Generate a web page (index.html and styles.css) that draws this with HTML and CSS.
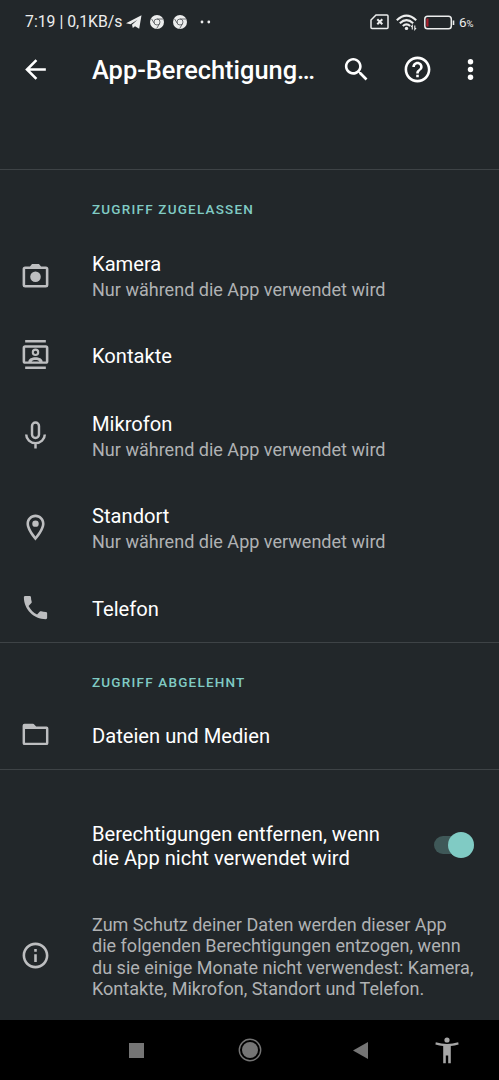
FILE: index.html
```html
<!DOCTYPE html>
<html lang="de">
<head>
<meta charset="utf-8">
<title>App-Berechtigungen</title>
<link rel="stylesheet" href="styles.css">
</head>
<body>
<div class="screen">
  <header class="status">
    <span class="clock">7:19 | 0,1KB/s</span>
    <svg class="plane" width="16" height="14" viewBox="0 0 16 14"><path fill="currentColor" d="M0 8.300 15.500 0.300 13.200 13.700 9 11.300 6.800 13 6 9.800 11.500 4.800 4.500 9.300z"/></svg>
    <svg class="chrome" width="14" height="14" viewBox="0 0 14 14"><circle cx="7" cy="7" r="7" fill="currentColor"/><g fill="none" stroke="#5b5f62" stroke-width=".9"><circle cx="7" cy="7" r="3"/><path d="M7 4h6M4.400 8.500 1.500 3.800M9.600 8.500 6.700 13.500"/></g></svg>
    <svg class="chrome" width="14" height="14" viewBox="0 0 14 14"><circle cx="7" cy="7" r="7" fill="currentColor"/><g fill="none" stroke="#5b5f62" stroke-width=".9"><circle cx="7" cy="7" r="3"/><path d="M7 4h6M4.400 8.500 1.500 3.800M9.600 8.500 6.700 13.500"/></g></svg>
    <svg class="more" width="11" height="4" viewBox="0 0 11 4" fill="currentColor"><circle cx="2" cy="2" r="1.400"/><circle cx="8.800" cy="2" r="1.400"/></svg>
    <svg class="sim" width="19" height="16" viewBox="0 0 19 16" fill="none" stroke="currentColor"><path stroke-width="1.500" d="M6 1h11q1 0 1 1v11.500q0 1-1 1H2q-1 0-1-1V6z"/><path stroke-width="2" d="m7.300 5.300 5 5m0-5-5 5"/></svg>
    <svg class="wifi" width="22" height="17" viewBox="0 0 22 17" fill="none" stroke="currentColor" stroke-width="2.100"><path d="M.8 6.200Q10.500-3 20.200 6.200M3.800 9.200q6.700-6 13.400 0M6.800 12q3.700-3.200 7.400 0"/><circle cx="10.500" cy="14.400" r="1.700" fill="currentColor" stroke="none"/><path stroke-width="1.100" d="M16.300 15.500v-4l-1.300 1.500M18.800 11.500v4l1.300-1.500"/></svg>
    <svg class="battery" width="31" height="15" viewBox="0 0 31 15"><rect x=".8" y="1.300" width="26.500" height="12.400" rx="2.800" fill="none" stroke="currentColor" stroke-width="1.500"/><path fill="#a91f2c" d="M2.300 3.500h2.200v8H2.300z"/><path fill="currentColor" d="M28.700 5.500h1.600v4.500h-1.600z"/></svg>
    <span class="charge">6<small>%</small></span>
  </header>

  <div class="toolbar">
    <svg class="icon" viewBox="0 0 24 24"><path d="M20 11H7.830l5.590-5.590L12 4l-8 8 8 8 1.410-1.410L7.830 13H20v-2z"/></svg>
    <h1 class="title">App-Berechtigung…</h1>
    <svg class="icon search" viewBox="0 0 24 24"><path d="M15.500 14h-.79l-.28-.27C15.410 12.590 16 11.110 16 9.500 16 5.910 13.090 3 9.500 3S3 5.910 3 9.500 5.910 16 9.500 16c1.610 0 3.090-.59 4.230-1.570l.27.28v.79l5 4.990L20.490 19l-4.990-5zm-6 0C7.010 14 5 11.990 5 9.500S7.010 5 9.500 5 14 7.010 14 9.500 11.990 14 9.500 14z"/></svg>
    <svg class="icon help" viewBox="0 0 24 24"><path d="M11 18h2v-2h-2v2zm1-16C6.480 2 2 6.480 2 12s4.480 10 10 10 10-4.480 10-10S17.520 2 12 2zm0 18c-4.410 0-8-3.590-8-8s3.590-8 8-8 8 3.590 8 8-3.590 8-8 8zm0-14c-2.210 0-4 1.790-4 4h2c0-1.100.9-2 2-2s2 .9 2 2c0 2-3 1.750-3 5h2c0-2.250 3-2.500 3-5 0-2.210-1.790-4-4-4z"/></svg>
    <svg class="icon menu" viewBox="0 0 24 24"><circle cx="12" cy="6" r="2.100"/><circle cx="12" cy="12" r="2.100"/><circle cx="12" cy="18" r="2.100"/></svg>
  </div>

  <main class="content">
    <section class="group allowed">
      <h2 class="label">Zugriff zugelassen</h2>
      <div class="row tall">
        <svg class="icon" viewBox="0 0 24 24"><path fill-rule="evenodd" d="M4 5h3.700L9.300 3h5.400l1.600 2H20q2 0 2 2v12.500q0 1.700-2 1.700H4q-2 0-2-1.700V7q0-2 2-2zm0 2v12.300h16V7z"/><circle cx="12" cy="13" r="4.100"/></svg>
        <div class="text"><div class="name">Kamera</div><div class="summary">Nur während die App verwendet wird</div></div>
      </div>
      <div class="row contacts">
        <svg class="icon" viewBox="0 0 24 24"><path fill-rule="evenodd" d="M4 .8h16v1.900H4zM4 21.300h16v1.900H4zM4 4.800h16q2 0 2 2v10.400q0 2-2 2H4q-2 0-2-2V6.800q0-2 2-2zm0 2v10.600h2.500c0-2 2.800-3.200 5.500-3.200s5.500 1.200 5.500 3.200H20V6.800zm5 10.600h6c-1.400-1.500-4.600-1.500-6 0z"/><circle cx="12" cy="10.300" r="2.100" fill="none" stroke="currentColor" stroke-width="1.600"/></svg>
        <div class="name">Kontakte</div>
      </div>
      <div class="row tall">
        <svg class="icon" viewBox="0 0 24 24"><path fill="none" stroke="currentColor" stroke-width="1.900" d="M9.300 4.700a2.700 2.700 0 0 1 5.400 0v6.500a2.700 2.700 0 0 1-5.400 0zM4.800 11.200a7.200 6.700 0 0 0 14.400 0M12 17.500V22"/></svg>
        <div class="text"><div class="name">Mikrofon</div><div class="summary">Nur während die App verwendet wird</div></div>
      </div>
      <div class="row tall">
        <svg class="icon" viewBox="0 0 24 24"><path d="M12 2C8.130 2 5 5.130 5 9c0 5.250 7 13 7 13s7-7.750 7-13c0-3.870-3.130-7-7-7zM7 9c0-2.760 2.240-5 5-5s5 2.240 5 5c0 2.880-2.880 7.190-5 9.880C9.920 16.210 7 11.850 7 9z"/><circle cx="12" cy="9" r="2.500"/></svg>
        <div class="text"><div class="name">Standort</div><div class="summary">Nur während die App verwendet wird</div></div>
      </div>
      <div class="row phone">
        <svg class="icon" viewBox="0 0 24 24"><path d="M6.620 10.790c1.440 2.830 3.760 5.140 6.590 6.590l2.200-2.200c.27-.27.67-.36 1.020-.24 1.120.37 2.330.57 3.570.57.55 0 1 .45 1 1V20c0 .55-.45 1-1 1-9.390 0-17-7.610-17-17 0-.55.45-1 1-1h3.500c.55 0 1 .45 1 1 0 1.250.2 2.450.57 3.570.11.35.03.74-.25 1.020l-2.200 2.200z"/></svg>
        <div class="name">Telefon</div>
      </div>
    </section>

    <section class="group denied">
      <h2 class="label">Zugriff abgelehnt</h2>
      <div class="row">
        <svg class="icon" viewBox="0 0 24 24"><path fill-rule="evenodd" d="M3.500 3.700H10q.7 0 1.200.7l1.300 1.500H20.500q1.500 0 1.500 1.500v11.300q0 1.500-1.500 1.500h-17Q2 20.200 2 18.700V5.200q0-1.500 1.500-1.500zM3.900 7.700v10.700h16.200V7.700z"/></svg>
        <div class="name">Dateien und Medien</div>
      </div>
    </section>

    <section class="group cleanup">
      <div class="row option">
        <div class="name">Berechtigungen entfernen, wenn<br>die App nicht verwendet wird</div>
        <div class="switch"><div class="thumb"></div></div>
      </div>
      <div class="row note">
        <svg class="icon" viewBox="0 0 24 24"><path d="M11 7h2v2h-2zm0 4h2v6h-2zm1-9C6.480 2 2 6.480 2 12s4.480 10 10 10 10-4.480 10-10S17.520 2 12 2zm0 18c-4.410 0-8-3.590-8-8s3.590-8 8-8 8 3.590 8 8-3.590 8-8 8z"/></svg>
        <p class="summary">Zum Schutz deiner Daten werden dieser App<br>die folgenden Berechtigungen entzogen, wenn<br>du sie einige Monate nicht verwendest: Kamera,<br>Kontakte, Mikrofon, Standort und Telefon.</p>
      </div>
    </section>
  </main>

  <nav class="nav">
    <svg class="recent" width="15" height="15" viewBox="0 0 15 15"><path fill="#757575" d="M0 0h15v15H0z"/></svg>
    <svg class="home" width="24" height="24" viewBox="0 0 24 24"><circle cx="12" cy="12" r="10.700" fill="none" stroke="#757575" stroke-width="1.400"/><circle cx="12" cy="12" r="8" fill="#757575"/></svg>
    <svg class="back" width="15" height="17" viewBox="0 0 15 17"><path fill="#757575" d="M15 0v17L0 8.500z"/></svg>
    <svg class="access" width="24" height="27" viewBox="0 0 24 27"><g fill="#a6a6a6"><circle cx="12" cy="3" r="2.600"/><path d="M.8 5.300Q12 8.700 23.200 5.300l.4 2.100Q19.500 8.600 15.800 9v17.200h-2.600V18.500h-2.400v7.700H8.200V9Q4.500 8.600.4 7.400z"/></g></svg>
  </nav>
</div>
</body>
</html>
```
FILE: styles.css
```css
* { box-sizing: border-box; }
body { margin: 0; background: #22272a; }
.screen {
  width: 499px;
  height: 1080px;
  display: flex;
  flex-direction: column;
  overflow: hidden;
  background: #22272a;
  color: #fff;
  font-family: Roboto, "Noto Sans", sans-serif;
}
h1, h2, p { margin: 0; font-weight: 400; }
svg { display: block; flex: none; }

.status {
  height: 44px;
  flex: none;
  padding-left: 25px;
  display: flex;
  align-items: center;
  color: #eceded;
}
.clock { width: 97px; font-size: 15.800px; line-height: 20px; white-space: nowrap; }
.plane { margin-left: 4px; }
.chrome { margin-left: 8px; }
.chrome + .chrome { margin-left: 9px; }
.more { margin-left: 13px; }
.sim { margin-left: auto; }
.wifi { margin-left: 7px; }
.battery { margin-left: 6px; }
.charge { width: 44px; padding-left: 4px; font-size: 13.500px; }
.charge small { font-size: 9.500px; }

.toolbar {
  height: 52px;
  flex: none;
  display: flex;
  align-items: center;
  padding: 0 0 1px 20px;
}
.icon { width: 31px; height: 31px; fill: currentColor; }
.title {
  width: 226px;
  margin: 1px 0 0 41px;
  font-size: 25.400px;
  line-height: 32px;
  font-weight: 500;
  white-space: nowrap;
}
.search { margin-left: 23px; }
.help { margin-left: 30px; }
.menu { margin-left: 22px; }

.content { flex: 1; min-height: 0; padding-top: 73px; }
.group { border-top: 1px solid #3e4346; }
.label {
  padding: 29px 0 0 92px;
  height: 61px;
  font-size: 13.500px;
  line-height: 20px;
  font-weight: 500;
  letter-spacing: 1.200px;
  text-transform: uppercase;
  color: #80cbc4;
}
.denied .label { height: 60px; }
.row {
  height: 67px;
  padding-left: 20px;
  display: flex;
  align-items: center;
  gap: 41px;
}
.contacts { padding-bottom: 2px; }
.phone { height: 66px; }
.denied .row { height: 66px; }
.row .icon { color: #bdbec0; margin-bottom: 3px; }
.tall { height: 92.500px; }
.name { font-size: 20.150px; line-height: 24px; }
.text .name { line-height: 26px; }
.summary { font-size: 18.050px; line-height: 21.300px; color: #b0b2b4; white-space: nowrap; }
.text .summary { line-height: 26px; }
.cleanup { padding-top: 30px; }
.option { height: 92px; padding: 0 25px 0 92px; justify-content: space-between; }
.switch {
  width: 40px;
  height: 18px;
  margin-bottom: 2px;
  border-radius: 9px;
  background: #3f5858;
  display: flex;
  justify-content: flex-end;
  align-items: center;
}
.thumb { width: 26px; height: 26px; flex: none; border-radius: 50%; background: #80cbc4; }
.note { height: 130px; }
.note .icon { margin-bottom: 2px; }

.nav {
  height: 60px;
  flex: none;
  display: flex;
  align-items: center;
  padding-left: 129px;
  background: #000;
}
.home { margin-left: 94px; }
.back { margin-left: 91px; }
.access { margin-left: 67px; }
```
